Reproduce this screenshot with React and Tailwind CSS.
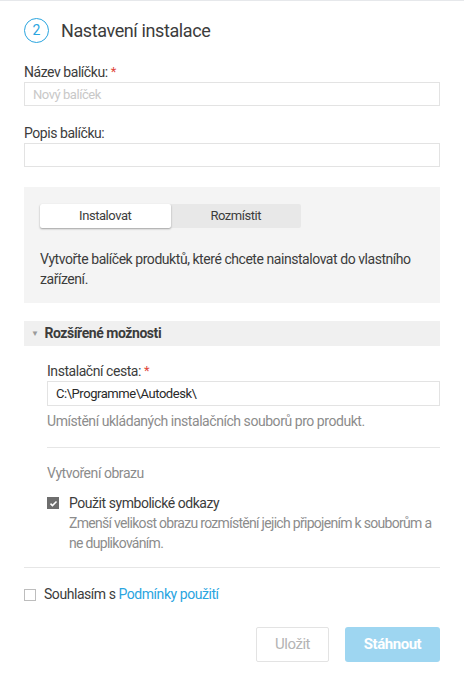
import { useState } from "react";

const Check = () => (
  <svg viewBox="0 0 12 12" className="w-[9px] h-[9px]" fill="none">
    <path d="M2 6.2l2.6 2.6L10 3.4" stroke="white" strokeWidth="2" />
  </svg>
);

export default function App() {
  const [tab, setTab] = useState("install");
  const [symlinks, setSymlinks] = useState(true);
  const [agree, setAgree] = useState(false);

  return (
    <div
      className="w-[464px] min-h-[677px] bg-white border-t border-[#e6e8eb] text-[#3c3c3c] text-[14px] tracking-[-0.45px]"
      style={{ fontFamily: "Roboto, 'Noto Sans', sans-serif" }}
    >
      <div className="px-6 pt-[16px]">
        <div className="flex items-center gap-3">
          <div className="w-[25px] h-[25px] rounded-full border-[1.5px] border-[#2aa5df] text-[#2aa5df] flex items-center justify-center text-[14px] tracking-normal">
            2
          </div>
          <h2 className="text-[18px] text-[#3c3c3c] tracking-[-0.4px]">Nastavení instalace</h2>
        </div>

        <div className="mt-[18px]">
          <label className="block leading-5">
            Název balíčku: <span className="text-[#e0463b] align-top text-[13px]">*</span>
          </label>
          <input
            className="w-full h-[24px] border border-[#e3e3e3] px-2 text-[13px] placeholder:text-[#c8c8c8] outline-none"
            placeholder="Nový balíček"
          />
        </div>

        <div className="mt-[17px]">
          <label className="block leading-5">Popis balíčku:</label>
          <input className="w-full h-[24px] border border-[#e3e3e3] px-2 outline-none" />
        </div>

        <div className="mt-[20px] bg-[#f4f4f4] px-4 pt-[17px] pb-[14px]">
          <div className="flex w-[261px] h-[24px] bg-[#e8e8e8] rounded-[2px]">
            <button
              onClick={() => setTab("install")}
              className={`flex-1 rounded-[2px] text-[13px] ${tab === "install" ? "bg-white shadow-[0_1px_2px_rgba(0,0,0,0.35)]" : ""}`}
            >
              Instalovat
            </button>
            <button
              onClick={() => setTab("deploy")}
              className={`flex-1 rounded-[2px] text-[13px] ${tab === "deploy" ? "bg-white shadow-[0_1px_2px_rgba(0,0,0,0.35)]" : ""}`}
            >
              Rozmístit
            </button>
          </div>
          <p className="mt-[21px] leading-5">
            Vytvořte balíček produktů, které chcete nainstalovat do vlastního zařízení.
          </p>
        </div>

        <div className="mt-[18px] h-[25px] bg-[#f0f0f0] flex items-center pl-[7px]">
          <span className="text-[#9a9a9a] text-[8px] mr-[6px]">▼</span>
          <span className="font-bold text-[#3c3c3c]">Rozšířené možnosti</span>
        </div>

        <div className="pl-[23px]">
          <div className="mt-[15px]">
            <label className="block leading-5">
              Instalační cesta: <span className="text-[#e0463b] align-top text-[13px]">*</span>
            </label>
            <input
              className="w-full h-[25px] border border-[#e3e3e3] px-2 text-[13px] text-[#2a2a2a] outline-none"
              defaultValue="C:\Programme\Autodesk\"
            />
            <p className="mt-[5px] leading-5 text-[#8c8c8c]">
              Umístění ukládaných instalačních souborů pro produkt.
            </p>
          </div>

          <div className="mt-[16px] border-t border-[#e6e6e6]" />

          <p className="mt-[15px] leading-5 text-[#8c8c8c]">Vytvoření obrazu</p>
          <div className="mt-[10px] flex gap-[10px]">
            <button
              onClick={() => setSymlinks(!symlinks)}
              className={`mt-[4px] w-[12px] h-[12px] flex items-center justify-center shrink-0 ${symlinks ? "bg-[#6e6e6e]" : "border border-[#bdbdbd]"}`}
            >
              {symlinks && <Check />}
            </button>
            <div>
              <p className="leading-5">Použit symbolické odkazy</p>
              <p className="leading-5 text-[#8c8c8c] tracking-[-0.7px]">
                Zmenší velikost obrazu rozmístění jejich připojením k souborům a ne duplikováním.
              </p>
            </div>
          </div>
        </div>

        <div className="mt-[14px] border-t border-[#e6e6e6]" />

        <div className="mt-[16px] flex items-center gap-[8px]">
          <button
            onClick={() => setAgree(!agree)}
            className={`w-[12px] h-[12px] flex items-center justify-center ${agree ? "bg-[#6e6e6e]" : "border border-[#bdbdbd]"}`}
          >
            {agree && <Check />}
          </button>
          <span>
            Souhlasím s <a className="text-[#2aa5df]">Podmínky použití</a>
          </span>
        </div>

        <div className="mt-[22px] flex justify-end gap-4">
          <button className="w-[73px] h-[35px] border border-[#e3e3e3] rounded-[2px] text-[15px] text-[#b4b4b4]">
            Uložit
          </button>
          <button className="w-[95px] h-[35px] rounded-[3px] bg-[#9ed6f1] text-white font-bold text-[15px]">
            Stáhnout
          </button>
        </div>
      </div>
    </div>
  );
}
